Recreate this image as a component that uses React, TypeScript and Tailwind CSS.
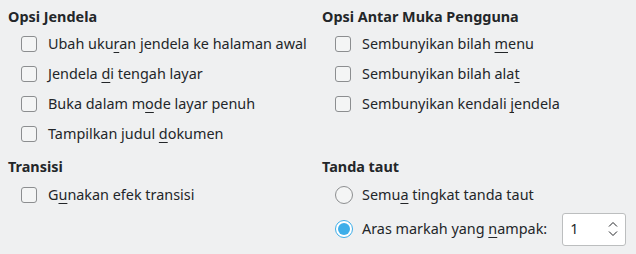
import React from "react";

const U = ({ children }: { children: React.ReactNode }) => (
  <span className="underline decoration-1 underline-offset-[3px]">{children}</span>
);

function Check({ children }: { children: React.ReactNode }) {
  return (
    <div className="flex h-[30px] items-center whitespace-nowrap pl-[13px]">
      <span className="box-border h-[16px] w-[16px] shrink-0 rounded-[3px] border border-[#8c8e90] bg-[#f4f5f5]" />
      <span className="ml-[11px] text-[#232629]">{children}</span>
    </div>
  );
}

function Radio({ checked, children }: { checked?: boolean; children: React.ReactNode }) {
  return (
    <div className="flex shrink-0 items-center whitespace-nowrap pl-[13px]">
      {checked ? (
        <span className="box-border flex h-[18px] w-[18px] shrink-0 items-center justify-center rounded-full border border-[#3daee9] bg-white">
          <span className="h-[12px] w-[12px] rounded-full bg-[#3daee9]" />
        </span>
      ) : (
        <span className="box-border h-[18px] w-[18px] shrink-0 rounded-full border border-[#8c8e90] bg-[#f4f5f5]" />
      )}
      <span className="ml-[9px] text-[#232629]">{children}</span>
    </div>
  );
}

export default function App() {
  return (
    <div
      className="h-[254px] w-[636px] bg-[#eff0f1] px-2 pt-[5px] text-[14.4px] text-[#232629]"
      style={{ fontFamily: '"Noto Sans", sans-serif' }}
    >
      <div className="grid grid-cols-[314px_1fr]">
        <div>
          <div className="flex h-[24px] items-center font-bold">Opsi Jendela</div>
          <Check>Ubah uku<U>r</U>an jendela ke halaman awal</Check>
          <Check>Jendela <U>d</U>i tengah layar</Check>
          <Check>Buka dalam m<U>o</U>de layar penuh</Check>
          <Check>Tampilkan judul <U>d</U>okumen</Check>
        </div>
        <div>
          <div className="flex h-[24px] items-center font-bold">Opsi Antar Muka Pengguna</div>
          <Check>Sembunyikan bilah <U>m</U>enu</Check>
          <Check>Sembunyikan bilah ala<U>t</U></Check>
          <Check>Sembunyikan kendali <U>j</U>endela</Check>
        </div>
      </div>
      <div className="mt-[6px] grid grid-cols-[314px_1fr]">
        <div>
          <div className="flex h-[24px] items-center font-bold">Transisi</div>
          <div className="mt-[1px]">
            <Check>G<U>u</U>nakan efek transisi</Check>
          </div>
        </div>
        <div>
          <div className="flex h-[24px] items-center font-bold">Tanda taut</div>
          <div className="mt-[1px] flex h-[30px] items-center">
            <Radio>Semu<U>a</U> tingkat tanda taut</Radio>
          </div>
          <div className="flex h-[38px] items-center">
            <Radio checked>Aras markah yang <U>n</U>ampak:</Radio>
            <div className="ml-[15px] box-border flex h-[33px] w-[64px] shrink-0 items-center justify-between rounded-[3px] border border-[#bcbebf] bg-white pl-[7px] pr-[6px]">
              <span>1</span>
              <svg width="12" height="20" viewBox="0 0 12 20" fill="none" stroke="#232629" strokeWidth="1">
                <path d="M2 7.5 L6 3.5 L10 7.5" />
                <path d="M2 12.5 L6 16.5 L10 12.5" />
              </svg>
            </div>
          </div>
        </div>
      </div>
    </div>
  );
}
